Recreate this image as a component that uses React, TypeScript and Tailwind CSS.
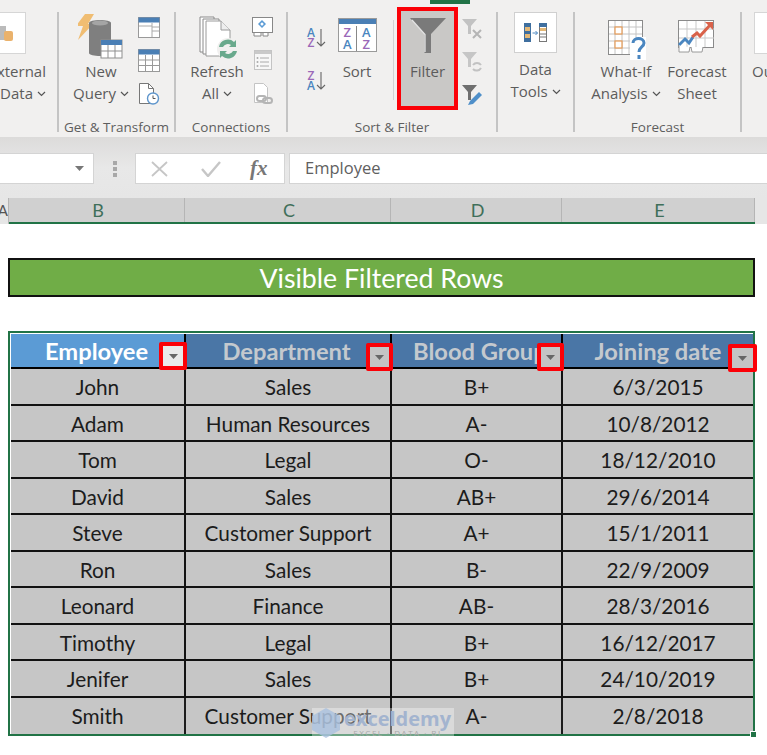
const rows = [
  ["John", "Sales", "B+", "6/3/2015"],
  ["Adam", "Human Resources", "A-", "10/8/2012"],
  ["Tom", "Legal", "O-", "18/12/2010"],
  ["David", "Sales", "AB+", "29/6/2014"],
  ["Steve", "Customer Support", "A+", "15/1/2011"],
  ["Ron", "Sales", "B-", "22/9/2009"],
  ["Leonard", "Finance", "AB-", "28/3/2016"],
  ["Timothy", "Legal", "B+", "16/12/2017"],
  ["Jenifer", "Sales", "B+", "24/10/2019"],
  ["Smith", "Customer Support", "A-", "2/8/2018"],
];

function Chevron() {
  return (
    <svg width="9" height="6" viewBox="0 0 9 6" className="inline-block ml-1 mb-[2px]">
      <path d="M1 1l3.5 3.5L8 1" fill="none" stroke="#555" strokeWidth="1.2" />
    </svg>
  );
}

function BigLabel({ lines, chevron }: { lines: string[]; chevron?: boolean }) {
  return (
    <div className="text-[15px] leading-[22px] text-[#5c5c5c] text-center whitespace-nowrap">
      {lines.map((l, i) => (
        <div key={l}>
          {l}
          {chevron && i === lines.length - 1 && <Chevron />}
        </div>
      ))}
    </div>
  );
}

function Group({ width, label, children }: { width: number; label?: string; children: React.ReactNode }) {
  return (
    <div className="relative flex flex-col shrink-0 h-[120px] border-r-2 border-[#c4c4c4]" style={{ width }}>
      <div className="flex-1 flex min-h-0">{children}</div>
      <div className="h-[12px] text-[13.5px] leading-[15px] text-[#5e5e5e] text-center whitespace-nowrap">{label}</div>
    </div>
  );
}

function NewQueryIcon() {
  return (
    <svg width="46" height="46" viewBox="0 0 46 46">
      <path d="M7 0h9l-6 10h5L0 26l5-14H-2z" fill="#f0bd72" />
      <path d="M11 9c0-4 22-4 22 0v30c0 4-22 4-22 0z" fill="#7f7f7f" />
      <ellipse cx="22" cy="9" rx="8" ry="2.6" fill="#a5a5a5" />
      <rect x="23" y="26" width="21" height="18" fill="#fff" stroke="#8f8f8f" />
      <rect x="23" y="26" width="21" height="5" fill="#4a7fb5" />
      <path d="M30 31v13M37 31v13M23 37h21" stroke="#8f8f8f" />
    </svg>
  );
}

function SmallTableIcons() {
  return (
    <div className="flex flex-col items-center gap-[11px] pt-[5px]">
      <svg width="22" height="21" viewBox="0 0 22 21">
        <rect x=".5" y=".5" width="21" height="20" fill="#fff" stroke="#999" />
        <rect x=".5" y=".5" width="21" height="5" fill="#4a7fb5" />
        <path d="M14 6v14M14 10h7M14 14h7M1 9h13" stroke="#aaa" />
      </svg>
      <svg width="22" height="23" viewBox="0 0 22 23">
        <rect x=".5" y=".5" width="21" height="22" fill="#fff" stroke="#999" />
        <rect x=".5" y=".5" width="21" height="5" fill="#4a7fb5" />
        <path d="M7.5 6v16M14.5 6v16M1 11h20M1 16.5h20" stroke="#999" />
      </svg>
      <svg width="22" height="22" viewBox="0 0 22 22">
        <path d="M1.500.5h9l5 5v15h-14z" fill="#fff" stroke="#777" />
        <path d="M10.500.5v5h5" fill="none" stroke="#777" />
        <circle cx="15" cy="15.500" r="5.500" fill="#fff" stroke="#5f96cc" strokeWidth="1.4" />
        <path d="M15 12.500v3h2.500" fill="none" stroke="#555" />
      </svg>
    </div>
  );
}

function RefreshIcon() {
  return (
    <svg width="42" height="44" viewBox="0 0 42 44" className="ml-[5px]">
      <path d="M1 1h14v35H1z" fill="#fff" stroke="#8a8a8a" />
      <path d="M4 3h16v35H4z" fill="#fff" stroke="#8a8a8a" />
      <path d="M7 5h15l9 9v26H7z" fill="#fff" stroke="#9a9a9a" />
      <path d="M22 5v9h9" fill="#eee" stroke="#9a9a9a" />
      <circle cx="29" cy="33" r="11" fill="#f1f0ef" />
      <path d="M20 31a9 9 0 0 1 15-5l2-2v7h-7l2-2a5.500 5.500 0 0 0-8 2z" fill="#69a98c" />
      <path d="M38 35a9 9 0 0 1-15 5l-2 2v-7h7l-2 2a5.500 5.500 0 0 0 8-2z" fill="#69a98c" />
    </svg>
  );
}

function ConnectionIcons() {
  return (
    <div className="flex flex-col items-center gap-[13px] pt-[5px]">
      <svg width="21" height="20" viewBox="0 0 21 20">
        <rect x=".5" y=".5" width="20" height="15" fill="#fff" stroke="#888" />
        <path d="M10 3l4 4-4 4-4-4z" fill="#5b9bd5" />
        <circle cx="10" cy="7" r="1.500" fill="#fff" />
        <path d="M2 16v3h7v-3M11 16v3h5v-3" fill="#fff" stroke="#888" />
      </svg>
      <svg width="18" height="20" viewBox="0 0 18 20">
        <rect x=".5" y=".5" width="17" height="19" fill="#f7f7f7" stroke="#c4c4c4" />
        <rect x="1" y="1" width="16" height="3" fill="#c9c9c9" />
        <path d="M6 8h9M6 12h9M6 16h9" stroke="#aaa" />
        <circle cx="3.500" cy="8" r="1" fill="#aaa" />
        <circle cx="3.500" cy="12" r="1" fill="#aaa" />
        <circle cx="3.500" cy="16" r="1" fill="#aaa" />
      </svg>
      <svg width="20" height="22" viewBox="0 0 20 22">
        <path d="M1.500.5h9l4 4v15h-13z" fill="#fff" stroke="#c4c4c4" />
        <rect x="4" y="13" width="9" height="5" rx="2.500" fill="none" stroke="#b5b5b5" strokeWidth="2" />
        <rect x="10" y="15" width="9" height="5" rx="2.500" fill="none" stroke="#b5b5b5" strokeWidth="2" />
      </svg>
    </div>
  );
}

function SortAZ({ flip }: { flip?: boolean }) {
  const top = flip ? "Z" : "A";
  const bottom = flip ? "A" : "Z";
  return (
    <div className="relative w-[20px] h-[22px] flex">
      <div className="text-[12px] leading-[10px] font-semibold w-[10px] text-center font-['Open_Sans',sans-serif]">
        <div className={flip ? "text-[#9a68b8]" : "text-[#4a86c0]"}>{top}</div>
        <div className={flip ? "text-[#4a86c0]" : "text-[#9a68b8]"}>{bottom}</div>
      </div>
      <svg width="10" height="20" viewBox="0 0 10 20">
        <path d="M5 1v17M1 14l4 4 4-4" fill="none" stroke="#666" strokeWidth="1.100" />
      </svg>
    </div>
  );
}

function SortIcon() {
  return (
    <div className="w-[39px] h-[34px] border border-[#9a9a9a] bg-white flex flex-col overflow-hidden">
      <div className="h-[5px] bg-[#4a7fb5]" />
      <div className="flex-1 grid grid-cols-2 text-[13px] leading-[12px] font-semibold text-center pt-[2px] font-['Open_Sans',sans-serif]">
        <div className="border-r border-[#888]">
          <div className="text-[#9a68b8]">Z</div>
          <div className="text-[#4a86c0]">A</div>
        </div>
        <div>
          <div className="text-[#4a86c0]">A</div>
          <div className="text-[#9a68b8]">Z</div>
        </div>
      </div>
    </div>
  );
}

function FunnelBig() {
  return (
    <svg width="36" height="36" viewBox="0 0 36 36">
      <path d="M0 0h36L21 16v19h-6.500V16z" fill="#7a7a7a" />
      <path d="M2 2l13 14.500V34" fill="none" stroke="#e2e2e2" strokeWidth="1.300" />
    </svg>
  );
}

function FunnelSmall({ color, extra }: { color: string; extra: "x" | "r" | "p" }) {
  return (
    <svg width="22" height="22" viewBox="0 0 22 22">
      <path d="M1 1h15l-6 7v8H7V8z" fill={color} />
      {extra === "x" && <path d="M12 12l8 8M20 12l-8 8" stroke="#b5b5b5" strokeWidth="2" />}
      {extra === "r" && <path d="M12 14a5 5 0 0 1 8 0M20 17a5 5 0 0 1-8 1" fill="none" stroke="#c2c2c2" strokeWidth="2" />}
      {extra === "p" && <path d="M7 21l2-4 9-9 3 3-9 9z" fill="#4f8fc9" />}
    </svg>
  );
}

function DataToolsIcon() {
  return (
    <div className="w-[43px] h-[41px] bg-white border border-[#d0d0d0] flex items-center justify-center">
      <svg width="24" height="20" viewBox="0 0 24 20">
        <rect x="0" y="0" width="7" height="19" fill="#3f6f9f" />
        <rect x="1" y="4" width="5" height="4" fill="#e4b877" />
        <rect x="1" y="11" width="5" height="4" fill="#e4b877" />
        <path d="M8.500 10h5M11.500 8l2 2-2 2" fill="none" stroke="#4a86c0" />
        <rect x="15.500" y=".5" width="7" height="18" fill="#fff" stroke="#777" />
        <rect x="15" y="0" width="8" height="4" fill="#3f6f9f" />
        <rect x="16" y="5" width="6" height="3" fill="#e4b877" />
        <path d="M16 11h6M16 14h6" stroke="#777" />
      </svg>
    </div>
  );
}

function WhatIfIcon() {
  return (
    <svg width="40" height="40" viewBox="0 0 40 40" className="ml-[3px]">
      <rect x=".5" y=".5" width="34" height="34" fill="#fff" stroke="#8a8a8a" />
      <path d="M7 1v33M14 1v33M21 1v33M28 1v33M1 7h33M1 14h33M1 21h33M1 28h33" stroke="#c4c4c4" />
      <rect x="7" y="7" width="7" height="7" fill="#fff" stroke="#e59a56" strokeWidth="1.200" />
      <rect x="7" y="21" width="7" height="7" fill="#fff" stroke="#e59a56" strokeWidth="1.200" />
      <rect x="22" y="17" width="16" height="23" fill="#fff" />
      <path d="M25 23c0-6 11-6 11 0 0 4-5 4-5 9" fill="none" stroke="#4a86c0" strokeWidth="3" />
      <rect x="29.500" y="35" width="3" height="4" fill="#4a86c0" />
    </svg>
  );
}

function ForecastIcon() {
  return (
    <svg width="38" height="33" viewBox="0 0 38 33">
      <rect x=".5" y=".5" width="35" height="27" fill="#fff" stroke="#8a8a8a" />
      <path d="M9 1v26M18 1v26M27 1v26M1 9h35M1 18h35" stroke="#c9c9c9" />
      <path d="M1 26v6h10l1-5M13 27l1 5h10l1-5" fill="#fff" stroke="#9a9a9a" />
      <path d="M1 25l6-6 4 4 4-6" fill="none" stroke="#4a86c0" strokeWidth="3" />
      <path d="M14 17l5-4 3 3 11-12" fill="none" stroke="#d9624a" strokeWidth="3" />
      <path d="M27 2h8v8z" fill="#d9624a" />
    </svg>
  );
}

function Ribbon() {
  return (
    <div className="relative h-[137px] bg-[#f1f0ef] pt-[12px] flex font-['Open_Sans',sans-serif]">
      <Group width={59}>
        <div className="w-[58px] overflow-hidden flex flex-col items-end">
          <div className="w-[26px] h-[42px] bg-white border border-[#d6d6d6] border-l-0 self-start flex items-center">
            <svg width="14" height="20" viewBox="0 0 14 20">
              <path d="M0 3h6v14H0z" fill="#bbb" />
              <rect x="4" y="8" width="9" height="10" rx="2" fill="#eab26c" />
            </svg>
          </div>
          <div className="mt-[6px] w-[58px] flex justify-end pr-[11px]">
            <div className="text-[15px] leading-[22px] text-[#5c5c5c] text-right whitespace-nowrap">
              <div>External</div>
              <div>Data<Chevron /></div>
            </div>
          </div>
        </div>
      </Group>

      <Group width={117} label="Get & Transform">
        <div className="flex pl-[14px] gap-[9px] w-full">
          <div className="flex flex-col items-center w-[56px] pt-[2px]">
            <NewQueryIcon />
            <BigLabel lines={["New", "Query"]} chevron />
          </div>
          <SmallTableIcons />
        </div>
      </Group>

      <Group width={112} label="Connections">
        <div className="flex pl-[14px] gap-[8px] w-full">
          <div className="flex flex-col items-center w-[54px] pt-[4px]">
            <RefreshIcon />
            <div><BigLabel lines={["Refresh", "All"]} chevron /></div>
          </div>
          <ConnectionIcons />
        </div>
      </Group>

      <Group width={210} label="Sort & Filter">
        <div className="flex pl-[16px] w-full">
          <div className="flex flex-col items-center gap-[21px] pt-[16px] w-[24px]">
            <SortAZ />
            <SortAZ flip />
          </div>
          <div className="flex flex-col items-center pt-[6px] ml-[9px] w-[40px]">
            <SortIcon />
            <div className="mt-[8px]"><BigLabel lines={["Sort"]} /></div>
          </div>
          <div className="w-px h-[80px] bg-[#d2d2d2] mt-[8px] ml-[16px]" />
          <div className="w-[61px] h-[103px] ml-[3px] -mt-[5px] border-[4px] border-[#fb0007] bg-[#c9c8c6] flex flex-col items-center pt-[7px]">
            <FunnelBig />
            <div className="mt-[6px]"><BigLabel lines={["Filter"]} /></div>
          </div>
          <div className="flex flex-col gap-[11px] pt-[6px] ml-[3px]">
            <FunnelSmall color="#c2c2c2" extra="x" />
            <FunnelSmall color="#c6c6c6" extra="r" />
            <FunnelSmall color="#6f6f6f" extra="p" />
          </div>
        </div>
      </Group>

      <Group width={77}>
        <div className="flex flex-col items-center w-full">
          <DataToolsIcon />
          <div className="mt-[5px]"><BigLabel lines={["Data", "Tools"]} chevron /></div>
        </div>
      </Group>

      <Group width={167} label="Forecast">
        <div className="flex pl-[14px] w-full">
          <div className="flex flex-col items-center w-[74px] pt-[8px]">
            <WhatIfIcon />
            <BigLabel lines={["What-If", "Analysis"]} chevron />
          </div>
          <div className="flex flex-col items-center w-[66px] ml-[1px] pt-[8px]">
            <ForecastIcon />
            <div className="mt-[7px]"><BigLabel lines={["Forecast", "Sheet"]} /></div>
          </div>
        </div>
      </Group>

      <div className="flex flex-col pl-[12px]">
        <div className="w-[20px] h-[42px] bg-white border border-[#d6d6d6]" />
        <div className="mt-[6px] -ml-[2px] text-[15px] leading-[22px] text-[#5c5c5c]">Ou</div>
      </div>

      <div className="absolute left-[430px] top-0 w-[40px] h-[4px] bg-[#217346]" />
    </div>
  );
}

function FormulaBar() {
  return (
    <div className="h-[61px] bg-gradient-to-b from-[#dcdbda] via-[#e8e8e8] to-[#e6e6e6] flex items-start pt-[16px] font-['Open_Sans',sans-serif]">
      <div className="w-[94px] h-[31px] bg-white border border-[#d4d4d4] border-l-0 flex items-center justify-end pr-[9px]">
        <svg width="9" height="6" viewBox="0 0 9 6"><path d="M0 0h9L4.500 5z" fill="#777" /></svg>
      </div>
      <div className="w-[41px] flex flex-col items-center gap-[2px] pt-[8px] pl-[1px]">
        <span className="w-[4px] h-[4px] bg-[#a8a8a8]" />
        <span className="w-[4px] h-[4px] bg-[#a8a8a8]" />
        <span className="w-[4px] h-[4px] bg-[#a8a8a8]" />
      </div>
      <div className="w-[150px] h-[31px] bg-white border border-[#d4d4d4] flex items-center pl-[15px]">
        <svg width="17" height="16" viewBox="0 0 17 16"><path d="M1 1l15 14M16 1L1 15" stroke="#c6c6c6" strokeWidth="1.800" /></svg>
        <svg width="20" height="16" viewBox="0 0 20 16" className="ml-[33px]"><path d="M1 8l6 7L19 1" fill="none" stroke="#c6c6c6" strokeWidth="2.400" /></svg>
        <span className="ml-[29px] text-[21px] leading-none italic font-bold text-[#777] font-['Liberation_Serif',serif]">fx</span>
      </div>
      <div className="ml-[4px] flex-1 h-[31px] bg-white border border-[#d4d4d4] border-r-0 flex items-center pl-[15px] text-[16.500px] text-[#606060]">
        Employee
      </div>
    </div>
  );
}

function ColumnHeaders() {
  const cols: [string, string][] = [["B", "w-[176px]"], ["C", "w-[206px]"], ["D", "w-[171px]"], ["E", "w-[193px]"]];
  return (
    <div className="h-[26px] bg-[#e6e6e6] flex font-['Lato',sans-serif] text-[18px] text-[#3f6f5a]">
      <div className="w-[9px] overflow-hidden flex justify-end text-[#555] text-[15px] leading-[25px] border-r border-[#b5b5b5]">A</div>
      <div className="flex border-b-[2px] border-[#217346] bg-[#d0d0d0]">
        {cols.map(([c, w]) => (
          <div key={c} className={`${w} pl-[3px] text-center leading-[24px] border-r border-[#b5b5b5]`}>{c}</div>
        ))}
      </div>
    </div>
  );
}

function FilterBtn({ className, light }: { className: string; light?: boolean }) {
  return (
    <div className={`absolute h-[28px] border-[4px] border-[#fb0007] rounded-[2px] flex items-center justify-center ${light ? "bg-[#e9e9e9]" : "bg-[#c4c4c4]"} ${className}`}>
      <svg width="9" height="5" viewBox="0 0 9 5"><path d="M0 0h9L4.500 5z" fill="#666" /></svg>
    </div>
  );
}

function DataTable() {
  const heads = ["Employee", "Department", "Blood Group", "Joining date"];
  return (
    <div className="relative ml-[8px] mt-[34px] w-[747px] h-[405px] border-[2px] border-[#217346] p-[1px] font-['Lato',sans-serif]">
      <div className="grid grid-cols-[175px_206px_171px_190px] text-[#1c1c1c] text-[20.800px]">
        {heads.map((h, i) => (
          <div
            key={h}
            className={`h-[35px] font-bold text-[23.700px] leading-[35px] overflow-hidden whitespace-nowrap border-b-[2px] border-black ${i < 3 ? "border-r-[2px]" : ""} ${
              i === 0 ? "bg-[#5b9bd5] text-white pl-[34px]" : "bg-[#4a76a6] text-[#c4c9ce] text-center"
            } ${i === 2 ? "text-left pl-[21px]" : ""} ${i === 1 ? "pr-[3px]" : ""}`}
          >
            {h}
          </div>
        ))}
        {rows.map((r, n) =>
          r.map((c, i) => (
            <div
              key={r[0] + r[2] + i}
              className={`leading-[36px] bg-[#c6c6c6] text-center whitespace-nowrap ${n < 9 ? "h-[36.500px] border-b-[2px] border-[#111]" : "h-[36px]"} ${i < 3 ? "border-r-[2px]" : ""}`}
            >
              {c}
            </div>
          ))
        )}
      </div>
      <FilterBtn light className="w-[28px] left-[149px] top-[9px]" />
      <FilterBtn className="w-[27px] left-[356px] top-[10px]" />
      <FilterBtn className="w-[27px] left-[527px] top-[10px]" />
      <FilterBtn className="w-[29px] left-[718px] top-[11px]" />
      <div className="absolute -right-[4px] -bottom-[4px] w-[7px] h-[7px] bg-[#217346] border border-white" />
      <div className="absolute left-[302px] top-[375px] w-[142px] h-[30px] bg-white/35 flex items-center">
        <svg width="28" height="30" viewBox="0 0 28 30" className="shrink-0">
          <path d="M14 0l14 8v14l-14 8L0 22V8z" fill="#a9c0de" opacity=".8" />
        </svg>
        <div className="flex flex-col items-center ml-[4px] font-['Open_Sans',sans-serif]">
          <span className="text-[20px] leading-[19px] font-bold text-[#a3b4cf]">exceldemy</span>
          <span className="text-[8px] leading-[9px] tracking-[1.500px] text-[#a9a9a9]">EXCEL · DATA · BI</span>
        </div>
      </div>
    </div>
  );
}

export default function App() {
  return (
    <div className="w-[767px] h-[755px] bg-white overflow-hidden">
      <Ribbon />
      <FormulaBar />
      <ColumnHeaders />
      <div className="mx-[8px] mt-[34px] h-[39px] w-[747px] bg-[#70ad47] border-[2px] border-[#111] flex items-center justify-center pt-[2px] text-white text-[26.700px] font-['Lato',sans-serif]">
        Visible Filtered Rows
      </div>
      <DataTable />
    </div>
  );
}
